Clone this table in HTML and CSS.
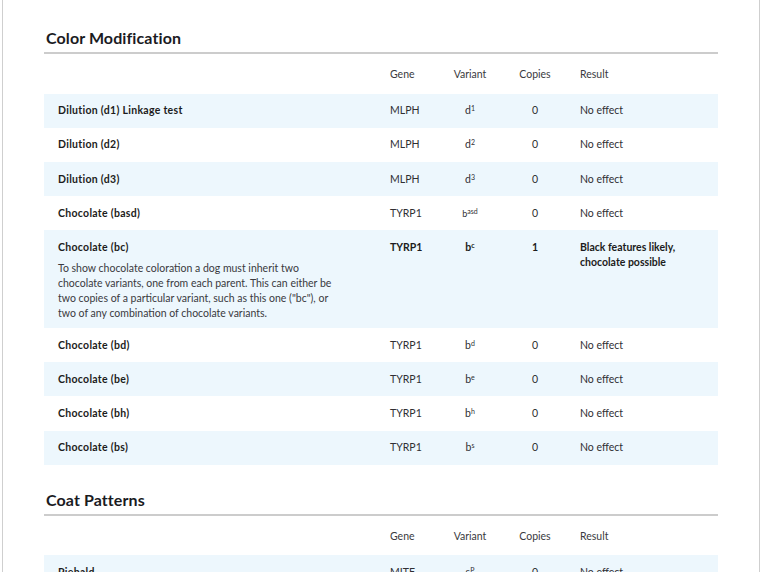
FILE: index.html
```html
<!DOCTYPE html>
<html lang="en">
<head>
<meta charset="utf-8">
<title>Traits</title>
<link rel="stylesheet" href="styles.css">
</head>
<body>
<div class="page">
  <section class="section">
    <h2 class="section-title">Color Modification</h2>
    <div class="table">
      <div class="row head">
        <div class="c-name"></div>
        <div class="c-gene">Gene</div>
        <div class="c-var">Variant</div>
        <div class="c-copies">Copies</div>
        <div class="c-result">Result</div>
      </div>
      <div class="row alt">
        <div class="c-name"><div class="title">Dilution (d1) Linkage test</div></div>
        <div class="c-gene">MLPH</div>
        <div class="c-var">d<sup>1</sup></div>
        <div class="c-copies">0</div>
        <div class="c-result">No effect</div>
      </div>
      <div class="row">
        <div class="c-name"><div class="title">Dilution (d2)</div></div>
        <div class="c-gene">MLPH</div>
        <div class="c-var">d<sup>2</sup></div>
        <div class="c-copies">0</div>
        <div class="c-result">No effect</div>
      </div>
      <div class="row alt">
        <div class="c-name"><div class="title">Dilution (d3)</div></div>
        <div class="c-gene">MLPH</div>
        <div class="c-var">d<sup>3</sup></div>
        <div class="c-copies">0</div>
        <div class="c-result">No effect</div>
      </div>
      <div class="row">
        <div class="c-name"><div class="title">Chocolate (basd)</div></div>
        <div class="c-gene">TYRP1</div>
        <div class="c-var"><span class="small">b</span><sup>asd</sup></div>
        <div class="c-copies">0</div>
        <div class="c-result">No effect</div>
      </div>
      <div class="row alt expanded">
        <div class="c-name">
          <div class="title">Chocolate (bc)</div>
          <p class="desc">To show chocolate coloration a dog must inherit two chocolate variants, one from each parent. This can either be two copies of a particular variant, such as this one ("bc"), or two of any combination of chocolate variants.</p>
        </div>
        <div class="c-gene strong">TYRP1</div>
        <div class="c-var strong">b<sup>c</sup></div>
        <div class="c-copies strong">1</div>
        <div class="c-result strong">Black features likely, chocolate possible</div>
      </div>
      <div class="row">
        <div class="c-name"><div class="title">Chocolate (bd)</div></div>
        <div class="c-gene">TYRP1</div>
        <div class="c-var">b<sup>d</sup></div>
        <div class="c-copies">0</div>
        <div class="c-result">No effect</div>
      </div>
      <div class="row alt">
        <div class="c-name"><div class="title">Chocolate (be)</div></div>
        <div class="c-gene">TYRP1</div>
        <div class="c-var">b<sup>e</sup></div>
        <div class="c-copies">0</div>
        <div class="c-result">No effect</div>
      </div>
      <div class="row">
        <div class="c-name"><div class="title">Chocolate (bh)</div></div>
        <div class="c-gene">TYRP1</div>
        <div class="c-var">b<sup>h</sup></div>
        <div class="c-copies">0</div>
        <div class="c-result">No effect</div>
      </div>
      <div class="row alt">
        <div class="c-name"><div class="title">Chocolate (bs)</div></div>
        <div class="c-gene">TYRP1</div>
        <div class="c-var">b<sup>s</sup></div>
        <div class="c-copies">0</div>
        <div class="c-result">No effect</div>
      </div>
    </div>
  </section>

  <section class="section">
    <h2 class="section-title">Coat Patterns</h2>
    <div class="table">
      <div class="row head">
        <div class="c-name"></div>
        <div class="c-gene">Gene</div>
        <div class="c-var">Variant</div>
        <div class="c-copies">Copies</div>
        <div class="c-result">Result</div>
      </div>
      <div class="row alt">
        <div class="c-name"><div class="title">Piebald</div></div>
        <div class="c-gene">MITF</div>
        <div class="c-var">s<sup>P</sup></div>
        <div class="c-copies">0</div>
        <div class="c-result">No effect</div>
      </div>
    </div>
  </section>
</div>
</body>
</html>
```

FILE: styles.css
```css
* { box-sizing: border-box; }

html, body {
  margin: 0;
  padding: 0;
  background: #ffffff;
}

body {
  font-family: Lato, "Liberation Sans", Arial, sans-serif;
  color: #2b2b2b;
  overflow: hidden;
}

.page {
  margin-left: 2px;
  width: 758px;
  min-height: 600px;
  border-left: 1px solid #cfcfcf;
  border-right: 1px solid #cfcfcf;
  padding: 3px 41px 0 41px;
}

.section {
  margin-top: 25px;
}

.section-title {
  margin: 0;
  padding: 0 0 4px 2px;
  font-size: 16px;
  line-height: 20px;
  font-weight: 700;
  letter-spacing: 0.1px;
  color: #1b1b1f;
  border-bottom: 2px solid #cccccc;
}

.table {
  display: flex;
  flex-direction: column;
}

.row {
  display: grid;
  grid-template-columns: 332px 50px 60px 70px 1fr;
  padding: 9.8px 14px 9.4px;
  font-size: 10.5px;
  line-height: 15px;
  color: #2f2f33;
}

.row.head {
  height: 39.5px;
  align-items: center;
  padding-top: 13px;
  padding-bottom: 11px;
  color: #3a3a3e;
}

.row.alt {
  background: #edf7fd;
}

.c-var,
.c-copies {
  text-align: center;
}

.c-result {
  padding-left: 10px;
}

.title {
  font-weight: 700;
  letter-spacing: 0.3px;
  color: #1c1c20;
}

.strong {
  font-weight: 700;
  color: #1c1c20;
}

.desc {
  margin: 5.5px 0 -2px 0;
  max-width: 285px;
  color: #3a3a3e;
  font-weight: 400;
  letter-spacing: 0;
}

sup {
  font-size: 7px;
  line-height: 0;
  vertical-align: 3px;
}

.small {
  font-size: 9px;
}
```
